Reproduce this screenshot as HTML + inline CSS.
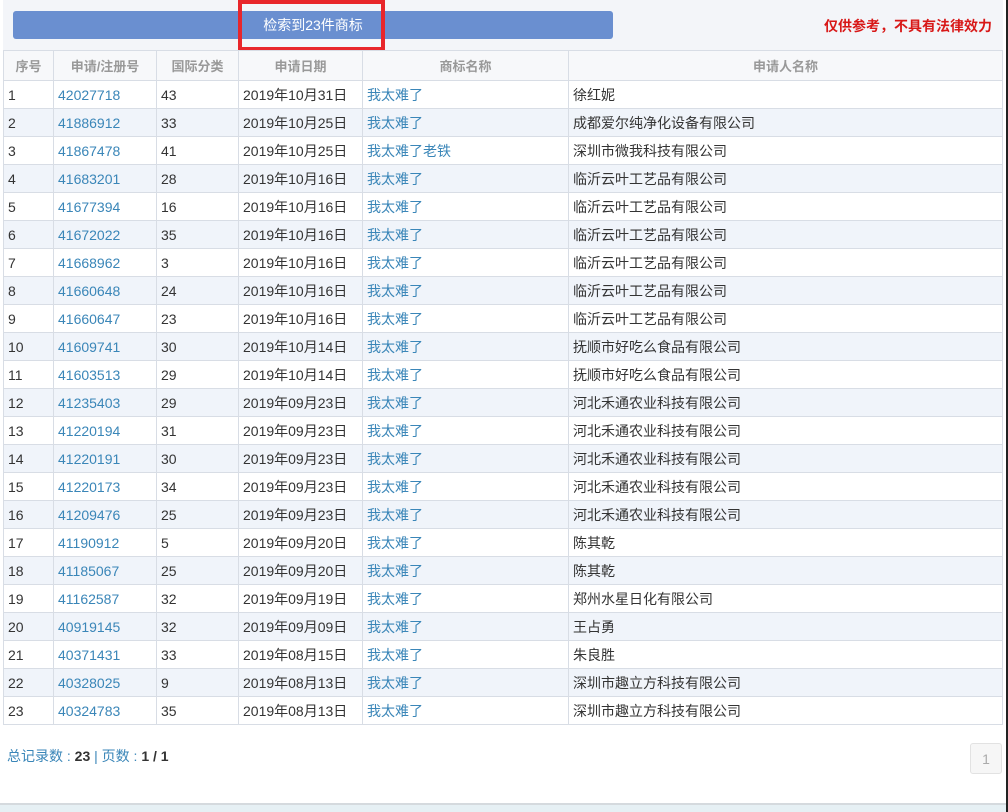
<!DOCTYPE html>
<html><head><meta charset="utf-8"><style>
*{margin:0;padding:0;box-sizing:border-box}
body{width:1008px;height:812px;background:#fff;font-family:"Liberation Sans","Noto Sans CJK SC",sans-serif;position:relative;overflow:hidden;color:#333}
.top{position:absolute;left:3px;top:0;width:1000px;height:51px;background:#f3f5f9;border-bottom:1px solid #d8dde5}
.btn{position:absolute;left:13px;top:11px;width:600px;height:28px;background:#6a8fd0;border-radius:3px;color:#fff;font-size:14px;text-align:center;line-height:28px}
.red{position:absolute;left:238px;top:0;width:147px;height:51px;border:4px solid #e8262b}
.note{position:absolute;right:16px;top:16px;color:#d81818;font-weight:bold;font-size:14px}
table{position:absolute;left:3px;top:50px;border-collapse:collapse;font-size:14px;table-layout:fixed}
td,th{border:1px solid #d8dde5;height:28px;padding:0 4px;white-space:nowrap;overflow:hidden}
th{height:30px;color:#999;font-weight:bold;font-size:13px;background:#f7f8fa;text-align:center}
tr:nth-child(odd) td{background:#f0f4fa}
td.a{color:#3a86b8}
.foot{position:absolute;left:7px;top:746px;font-size:14px;color:#3a86b8}
.foot b{color:#333}
.pg{position:absolute;left:970px;top:743px;width:32px;height:31px;border:1px solid #e2e2e2;border-radius:3px;background:#f6f6f6;color:#aaa;text-align:center;line-height:30px;font-size:14px}
.bl{position:absolute;left:0;top:803px;width:1008px;height:2px;background:#d5dade}
.bb{position:absolute;left:0;top:805px;width:1008px;height:7px;background:#e6f0f4}
.rs{position:absolute;left:1006px;top:0;width:2px;height:812px;background:#222}
</style></head><body>
<div class="top"></div>
<div class="btn">检索到23件商标</div>
<div class="red"></div>
<div class="note">仅供参考，不具有法律效力</div>
<table>
<colgroup><col style="width:50px"><col style="width:103px"><col style="width:82px"><col style="width:124px"><col style="width:206px"><col style="width:434px"></colgroup>
<tr><th>序号</th><th>申请/注册号</th><th>国际分类</th><th>申请日期</th><th>商标名称</th><th>申请人名称</th></tr>
<tr><td>1</td><td class="a">42027718</td><td>43</td><td>2019年10月31日</td><td class="a">我太难了</td><td>徐红妮</td></tr>
<tr><td>2</td><td class="a">41886912</td><td>33</td><td>2019年10月25日</td><td class="a">我太难了</td><td>成都爱尔纯净化设备有限公司</td></tr>
<tr><td>3</td><td class="a">41867478</td><td>41</td><td>2019年10月25日</td><td class="a">我太难了老铁</td><td>深圳市微我科技有限公司</td></tr>
<tr><td>4</td><td class="a">41683201</td><td>28</td><td>2019年10月16日</td><td class="a">我太难了</td><td>临沂云叶工艺品有限公司</td></tr>
<tr><td>5</td><td class="a">41677394</td><td>16</td><td>2019年10月16日</td><td class="a">我太难了</td><td>临沂云叶工艺品有限公司</td></tr>
<tr><td>6</td><td class="a">41672022</td><td>35</td><td>2019年10月16日</td><td class="a">我太难了</td><td>临沂云叶工艺品有限公司</td></tr>
<tr><td>7</td><td class="a">41668962</td><td>3</td><td>2019年10月16日</td><td class="a">我太难了</td><td>临沂云叶工艺品有限公司</td></tr>
<tr><td>8</td><td class="a">41660648</td><td>24</td><td>2019年10月16日</td><td class="a">我太难了</td><td>临沂云叶工艺品有限公司</td></tr>
<tr><td>9</td><td class="a">41660647</td><td>23</td><td>2019年10月16日</td><td class="a">我太难了</td><td>临沂云叶工艺品有限公司</td></tr>
<tr><td>10</td><td class="a">41609741</td><td>30</td><td>2019年10月14日</td><td class="a">我太难了</td><td>抚顺市好吃么食品有限公司</td></tr>
<tr><td>11</td><td class="a">41603513</td><td>29</td><td>2019年10月14日</td><td class="a">我太难了</td><td>抚顺市好吃么食品有限公司</td></tr>
<tr><td>12</td><td class="a">41235403</td><td>29</td><td>2019年09月23日</td><td class="a">我太难了</td><td>河北禾通农业科技有限公司</td></tr>
<tr><td>13</td><td class="a">41220194</td><td>31</td><td>2019年09月23日</td><td class="a">我太难了</td><td>河北禾通农业科技有限公司</td></tr>
<tr><td>14</td><td class="a">41220191</td><td>30</td><td>2019年09月23日</td><td class="a">我太难了</td><td>河北禾通农业科技有限公司</td></tr>
<tr><td>15</td><td class="a">41220173</td><td>34</td><td>2019年09月23日</td><td class="a">我太难了</td><td>河北禾通农业科技有限公司</td></tr>
<tr><td>16</td><td class="a">41209476</td><td>25</td><td>2019年09月23日</td><td class="a">我太难了</td><td>河北禾通农业科技有限公司</td></tr>
<tr><td>17</td><td class="a">41190912</td><td>5</td><td>2019年09月20日</td><td class="a">我太难了</td><td>陈其乾</td></tr>
<tr><td>18</td><td class="a">41185067</td><td>25</td><td>2019年09月20日</td><td class="a">我太难了</td><td>陈其乾</td></tr>
<tr><td>19</td><td class="a">41162587</td><td>32</td><td>2019年09月19日</td><td class="a">我太难了</td><td>郑州水星日化有限公司</td></tr>
<tr><td>20</td><td class="a">40919145</td><td>32</td><td>2019年09月09日</td><td class="a">我太难了</td><td>王占勇</td></tr>
<tr><td>21</td><td class="a">40371431</td><td>33</td><td>2019年08月15日</td><td class="a">我太难了</td><td>朱良胜</td></tr>
<tr><td>22</td><td class="a">40328025</td><td>9</td><td>2019年08月13日</td><td class="a">我太难了</td><td>深圳市趣立方科技有限公司</td></tr>
<tr><td>23</td><td class="a">40324783</td><td>35</td><td>2019年08月13日</td><td class="a">我太难了</td><td>深圳市趣立方科技有限公司</td></tr>
</table>
<div class="foot">总记录数 : <b>23</b> | 页数 : <b>1 / 1</b></div>
<div class="pg">1</div>
<div class="bl"></div><div class="bb"></div>
<div class="rs"></div>
</body></html>
